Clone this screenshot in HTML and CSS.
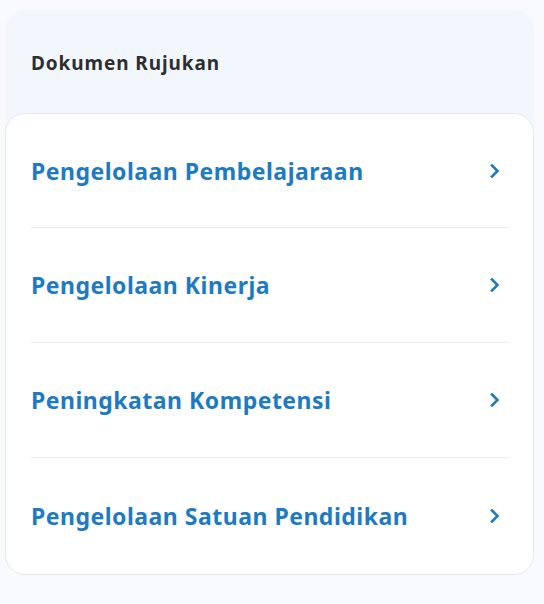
FILE: index.html
```html
<!DOCTYPE html>
<html lang="id">
<head>
<meta charset="utf-8">
<title>Dokumen Rujukan</title>
<link rel="stylesheet" href="styles.css">
</head>
<body>
<div class="page">
  <section class="panel">
    <h2 class="panel-title">Dokumen Rujukan</h2>
    <ul class="list">
      <li class="item"><a class="item-link" href="#"><span>Pengelolaan Pembelajaraan</span><svg class="chev" viewBox="0 0 10 14" width="10" height="14"><path d="M2 1.5 L7.5 7 L2 12.5"/></svg></a></li>
      <li class="item"><a class="item-link" href="#"><span>Pengelolaan Kinerja</span><svg class="chev" viewBox="0 0 10 14" width="10" height="14"><path d="M2 1.5 L7.5 7 L2 12.5"/></svg></a></li>
      <li class="item"><a class="item-link" href="#"><span>Peningkatan Kompetensi</span><svg class="chev" viewBox="0 0 10 14" width="10" height="14"><path d="M2 1.5 L7.5 7 L2 12.5"/></svg></a></li>
      <li class="item"><a class="item-link" href="#"><span>Pengelolaan Satuan Pendidikan</span><svg class="chev" viewBox="0 0 10 14" width="10" height="14"><path d="M2 1.5 L7.5 7 L2 12.5"/></svg></a></li>
    </ul>
  </section>
</div>
</body>
</html>
```
FILE: styles.css
```css
html, body {
  margin: 0;
  padding: 0;
  background: #f9fafd;
}
body {
  font-family: "Noto Sans", "Open Sans", sans-serif;
}
.page {
  padding: 10px 10px 0 5px;
}
.panel {
  width: 529px;
  background: #f2f7fe;
  border-radius: 20px;
}
.panel-title {
  margin: 0;
  padding: 40px 26px 37px;
  font-size: 19px;
  line-height: 26px;
  font-weight: 700;
  letter-spacing: 0.9px;
  color: #2e2e30;
}
.list {
  list-style: none;
  margin: 0;
  padding: 0;
  background: #ffffff;
  border: 1px solid #e6e8ec;
  border-radius: 20px;
}
.item {
  padding: 0 24px 0 25px;
}
.item-link {
  display: flex;
  align-items: center;
  justify-content: space-between;
  height: 114px;
  border-bottom: 1px solid #ebedf0;
  text-decoration: none;
  color: #1e7ac1;
  font-size: 23px;
  font-weight: 700;
  letter-spacing: 0.5px;
}
.item:first-child .item-link {
  height: 113px;
}
.item:last-child .item-link {
  border-bottom: none;
  height: 116px;
}
.chev {
  margin-right: 9px;
  fill: none;
  stroke: #1e7ac1;
  stroke-width: 2.6;
  stroke-linecap: square;
}
```
